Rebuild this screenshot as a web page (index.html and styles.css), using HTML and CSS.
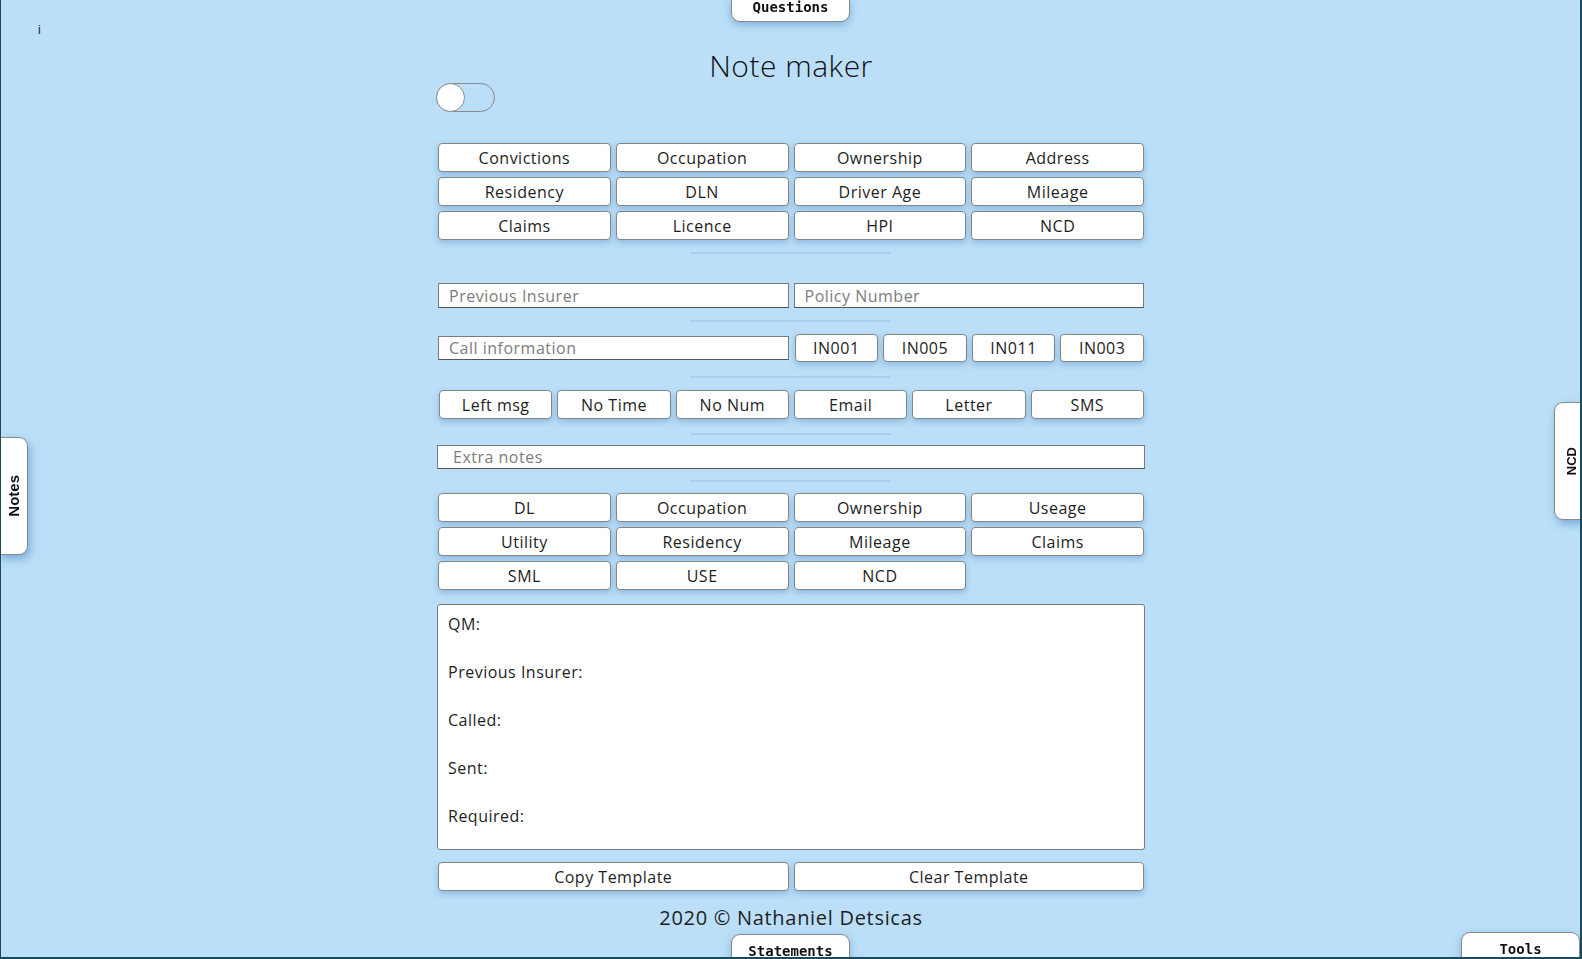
FILE: index.html
```html
<!DOCTYPE html>
<html lang="en">
<head>
<meta charset="utf-8">
<title>Note maker</title>
<link rel="stylesheet" href="styles.css">
</head>
<body>
<div class="frame"></div>
<div class="info">i</div>
<div class="tab tab-top">Questions</div>
<div class="tab tab-bottom">Statements</div>
<div class="tab tab-tools">Tools</div>
<div class="side side-left"><span>Notes</span></div>
<div class="side side-right"><span>NCD</span></div>

<main class="wrap">
  <h1 class="title">Note maker</h1>
  <div class="toggle"><span class="knob"></span></div>

  <div class="grid4 first-grid">
    <button class="btn">Convictions</button>
    <button class="btn">Occupation</button>
    <button class="btn">Ownership</button>
    <button class="btn">Address</button>
    <button class="btn">Residency</button>
    <button class="btn">DLN</button>
    <button class="btn">Driver Age</button>
    <button class="btn">Mileage</button>
    <button class="btn">Claims</button>
    <button class="btn">Licence</button>
    <button class="btn">HPI</button>
    <button class="btn">NCD</button>
  </div>

  <div class="sep sep-wide"></div>

  <div class="pair">
    <input class="field" type="text" placeholder="Previous Insurer">
    <input class="field" type="text" placeholder="Policy Number">
  </div>

  <div class="sep"></div>

  <div class="pair call-row">
    <input class="field" type="text" placeholder="Call information">
    <div class="codes">
      <button class="btn">IN001</button>
      <button class="btn">IN005</button>
      <button class="btn">IN011</button>
      <button class="btn">IN003</button>
    </div>
  </div>

  <div class="sep sep-b"></div>

  <div class="grid6">
    <button class="btn">Left msg</button>
    <button class="btn">No Time</button>
    <button class="btn">No Num</button>
    <button class="btn">Email</button>
    <button class="btn">Letter</button>
    <button class="btn">SMS</button>
  </div>

  <div class="sep sep-c"></div>

  <input class="field field-wide" type="text" placeholder="Extra notes">

  <div class="sep sep-d"></div>

  <div class="grid4">
    <button class="btn">DL</button>
    <button class="btn">Occupation</button>
    <button class="btn">Ownership</button>
    <button class="btn">Useage</button>
    <button class="btn">Utility</button>
    <button class="btn">Residency</button>
    <button class="btn">Mileage</button>
    <button class="btn">Claims</button>
    <button class="btn">SML</button>
    <button class="btn">USE</button>
    <button class="btn">NCD</button>
  </div>

  <textarea class="notes">QM:

Previous Insurer:

Called:

Sent:

Required:</textarea>

  <div class="pair actions">
    <button class="btn">Copy Template</button>
    <button class="btn">Clear Template</button>
  </div>

  <footer class="foot">2020 © Nathaniel Detsicas</footer>
</main>
</body>
</html>
```

FILE: styles.css
```css
* { box-sizing: border-box; }

html, body {
  margin: 0;
  padding: 0;
}

body {
  background: #bbdff8;
  font-family: "Open Sans", "Noto Sans", sans-serif;
  color: #1e1e1e;
  min-height: 100vh;
  overflow: hidden;
}

.frame {
  position: fixed;
  inset: 0;
  border-left: 1px solid #1b4a5a;
  border-right: 2px solid #1b4a5a;
  border-bottom: 2px solid #1b4a5a;
  pointer-events: none;
  z-index: 10;
}

.info {
  font-family: "Liberation Sans", sans-serif;
  font-size: 12px;
  line-height: 12px;
  padding: 24px 0 0 38px;
  height: 36px;
  color: #222;
}

.tab {
  position: fixed;
  width: 119px;
  background: #fff;
  border: 1px solid #8a8a8a;
  font-family: "DejaVu Sans Mono", "Liberation Mono", monospace;
  font-weight: bold;
  font-size: 14px;
  color: #111;
  text-align: center;
  box-shadow: 0 3px 8px rgba(60, 120, 180, 0.45);
}

.tab-top {
  top: -2px;
  left: 731px;
  height: 24px;
  line-height: 16px;
  border-radius: 0 0 9px 9px;
}

.tab-bottom {
  left: 731px;
  top: 934px;
  height: 30px;
  padding-top: 8px;
  line-height: 16px;
  border-radius: 9px 9px 0 0;
}

.tab-tools {
  left: 1461px;
  top: 932px;
  height: 30px;
  padding-top: 8px;
  line-height: 16px;
  border-radius: 9px 9px 0 0;
}

.side {
  position: fixed;
  width: 29px;
  height: 118px;
  background: #fff;
  border: 1px solid #8a8a8a;
  box-shadow: 2px 4px 8px rgba(60, 120, 180, 0.5);
  display: flex;
  align-items: center;
  justify-content: center;
  font-family: "Liberation Sans", "DejaVu Sans", sans-serif;
  font-weight: bold;
  font-size: 13px;
  color: #111;
}

.side span {
  writing-mode: vertical-rl;
  transform: rotate(180deg);
}

.side-left {
  left: -1px;
  top: 437px;
  border-radius: 0 9px 9px 0;
  font-size: 15px;
}

.side-right {
  left: 1554px;
  top: 402px;
  border-radius: 9px 0 0 9px;
  padding-left: 5px;
}

.wrap {
  width: 708px;
  margin: 0 auto;
  letter-spacing: 0.5px;
}

.title {
  margin: 13px 0 0;
  font-size: 30px;
  line-height: 34px;
  font-weight: 300;
  text-align: center;
  color: #111;
}

.toggle {
  width: 59px;
  height: 29px;
  border: 1px solid #8a8a8a;
  border-radius: 15px;
  background: #bbdff8;
  position: relative;
  margin-left: -1px;
}

.knob {
  position: absolute;
  left: -1px;
  top: -1px;
  width: 29px;
  height: 29px;
  border-radius: 50%;
  background: #fff;
  border: 1px solid #8a8a8a;
}

.btn {
  background: #fff;
  border: 1px solid #858585;
  border-radius: 4px;
  font-family: "Open Sans", "Noto Sans", sans-serif;
  font-size: 16px;
  letter-spacing: 0.5px;
  color: #1e1e1e;
  height: 29px;
  padding: 0;
  box-shadow: 0 3px 6px rgba(60, 120, 180, 0.35);
  cursor: pointer;
}

.grid4 {
  display: grid;
  grid-template-columns: repeat(4, 1fr);
  grid-auto-rows: 29px;
  gap: 5px;
  padding: 0 1px;
}

.first-grid {
  margin-top: 31px;
}

.sep {
  width: 200px;
  height: 2px;
  background: #a7d1ee;
  margin: 12px auto;
}

.sep-wide { margin-bottom: 29px; }
.sep-b { margin: 14px auto 12px; }
.sep-c { margin: 14px auto 10px; }
.sep-d { margin: 11px auto 11px; }

.pair {
  display: grid;
  grid-template-columns: 1fr 1fr;
  gap: 5px;
  padding: 0 1px;
}

.field {
  height: 25px;
  border: 1px solid #7a7a7a;
  border-bottom-color: #555;
  background: #fff;
  font-family: "Open Sans", "Noto Sans", sans-serif;
  font-size: 16px;
  letter-spacing: 0.5px;
  color: #222;
  padding: 0 10px;
  border-radius: 0;
  outline: none;
}

.field::placeholder {
  color: #7d7d7d;
}

.call-row {
  align-items: center;
  height: 28px;
}

.call-row .field {
  height: 24px;
}

.codes {
  display: grid;
  grid-template-columns: repeat(4, 1fr);
  gap: 5px;
  padding-left: 1px;
}

.codes .btn {
  height: 28px;
}

.grid6 {
  display: grid;
  grid-template-columns: repeat(6, 1fr);
  gap: 5px;
  padding: 0 1px 0 2px;
}

.field-wide {
  display: block;
  width: 100%;
  height: 24px;
  padding-left: 15px;
}

.notes {
  display: block;
  width: 100%;
  height: 246px;
  margin-top: 14px;
  border: 1px solid #7a7a7a;
  border-radius: 3px;
  background: #fff;
  font-family: "Open Sans", "Noto Sans", sans-serif;
  font-size: 16px;
  letter-spacing: 0.5px;
  line-height: 24px;
  color: #1e1e1e;
  padding: 7px 10px;
  resize: none;
  outline: none;
}

.actions {
  margin-top: 12px;
}

.actions .btn {
  height: 29px;
}

.foot {
  margin-top: 15px;
  text-align: center;
  font-size: 20px;
  letter-spacing: 0.7px;
  line-height: 24px;
  color: #1e1e1e;
}
```
